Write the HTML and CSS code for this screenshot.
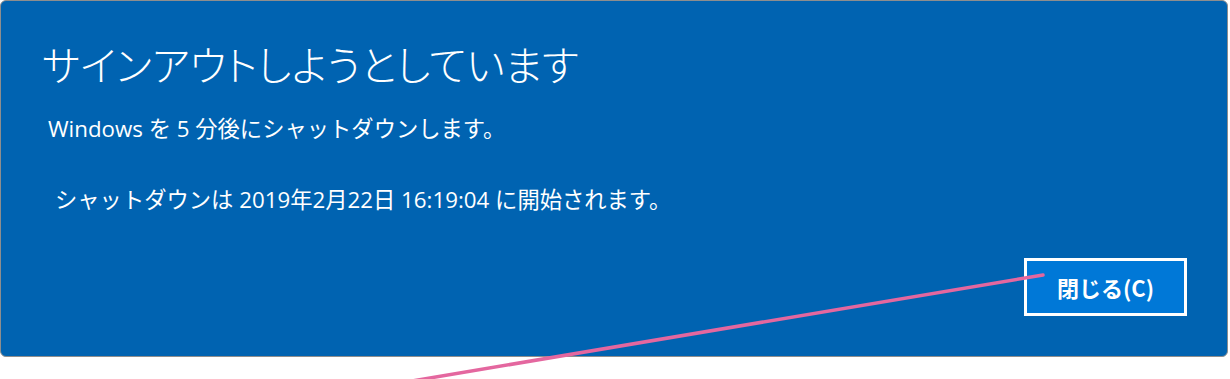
FILE: index.html
```html
<!DOCTYPE html>
<html lang="ja">
<head>
  <meta charset="UTF-8">
  <title>サインアウト</title>
  <link rel="stylesheet" href="styles.css">
</head>
<body>

<div class="dialog">
  <h1 class="title">サインアウトしようとしています</h1>
  <p class="msg">Windows を 5 分後にシャットダウンします。</p>
  <p class="msg sub">シャットダウンは 2019年2月22日 16:19:04 に開始されます。</p>
  <div class="actions">
    <button class="close-btn">閉じる(C)</button>
  </div>
</div>

<svg class="pointer" width="1230" height="379" viewBox="0 0 1230 379">
  <line x1="1043" y1="275" x2="412" y2="381" stroke="#e4679f" stroke-width="3.5" stroke-linecap="round"/>
</svg>

</body>
</html>
```

FILE: styles.css
```css
html, body {
  height: 379px;
}
body {
  margin: 0;
  background: #fff;
  font-family: "Open Sans", "Noto Sans CJK JP", sans-serif;
  position: relative;
  overflow: hidden;
}
.dialog {
  box-sizing: border-box;
  width: 1228px;
  height: 357px;
  background: #0063b1;
  border: 1px solid #8e8e8e;
  border-radius: 6px;
  color: #fff;
  padding: 37px 40px 40px 41px;
  display: flex;
  flex-direction: column;
}
.title {
  margin: 0;
  font-family: "Noto Sans CJK JP", sans-serif;
  font-weight: 300;
  font-size: 40.5px;
  line-height: 52px;
  font-feature-settings: "palt";
}
.msg {
  margin: 25px 0 0 6px;
  font-size: 22.3px;
  line-height: 28px;
}
.msg.sub {
  margin-top: 43px;
  margin-left: 13px;
}
.actions {
  margin-top: auto;
  display: flex;
  justify-content: flex-end;
}
.close-btn {
  width: 163px;
  height: 58px;
  background: #0078d7;
  border: 3px solid #fff;
  color: #fff;
  font-family: "Noto Sans CJK JP", sans-serif;
  font-weight: 700;
  font-size: 22px;
  padding: 0;
}
.pointer {
  position: absolute;
  left: 0;
  top: 0;
  pointer-events: none;
}
```
